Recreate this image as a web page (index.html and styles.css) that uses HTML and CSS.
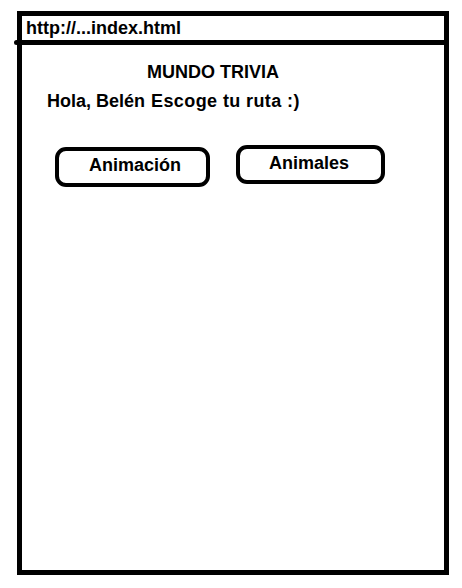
FILE: index.html
```html
<!DOCTYPE html>
<html lang="es">
<head>
<meta charset="utf-8">
<title>Mundo Trivia</title>
<link rel="stylesheet" href="styles.css">
</head>
<body>
  <div class="frame">
    <div class="urlbar">http://...index.html</div>
    <main class="content">
      <h1 class="title">MUNDO TRIVIA</h1>
      <p class="greeting"><span>Hola, Belén</span> <span class="prompt">Escoge tu ruta :)</span></p>
      <div class="routes">
        <button class="route route-a">Animación</button>
        <button class="route route-b">Animales</button>
      </div>
    </main>
  </div>
</body>
</html>
```

FILE: styles.css
```css
html, body {
  margin: 0;
  padding: 0;
  background: #fff;
}

body {
  font-family: "Liberation Sans", Arial, sans-serif;
  font-weight: bold;
  font-size: 18px;
  color: #000;
}

.frame {
  box-sizing: border-box;
  margin: 11px 0 0 17px;
  width: 432px;
  height: 564px;
  border: 5px solid #000;
  display: flex;
  flex-direction: column;
}

.urlbar {
  position: relative;
  height: 24px;
  line-height: 24px;
  padding-left: 4px;
  border-bottom: 5px solid #000;
  white-space: nowrap;
}

.urlbar::before {
  content: "";
  position: absolute;
  left: -8px;
  bottom: -5px;
  width: 5px;
  height: 5px;
  border-radius: 50%;
  background: #000;
}

.content {
  flex: 1;
}

.title {
  margin: 17px 0 0 125px;
  font-size: 18px;
  line-height: 20px;
  font-weight: bold;
}

.greeting {
  margin: 9px 0 0 25px;
  line-height: 20px;
}

.prompt {
  margin-left: 1px;
  letter-spacing: 0.4px;
}

.routes {
  display: flex;
  align-items: flex-start;
  gap: 26px;
  margin: 34px 0 0 33px;
}

.route {
  box-sizing: border-box;
  font: inherit;
  color: #000;
  background: #fff;
  border: 4px solid #000;
  border-radius: 11px;
  text-align: left;
  line-height: 20px;
  cursor: pointer;
}

.route-a {
  width: 155px;
  height: 40px;
  margin-top: 2px;
  padding: 0 0 4px 30px;
}

.route-b {
  width: 149px;
  height: 39px;
  padding: 0 0 3px 29px;
}
```
